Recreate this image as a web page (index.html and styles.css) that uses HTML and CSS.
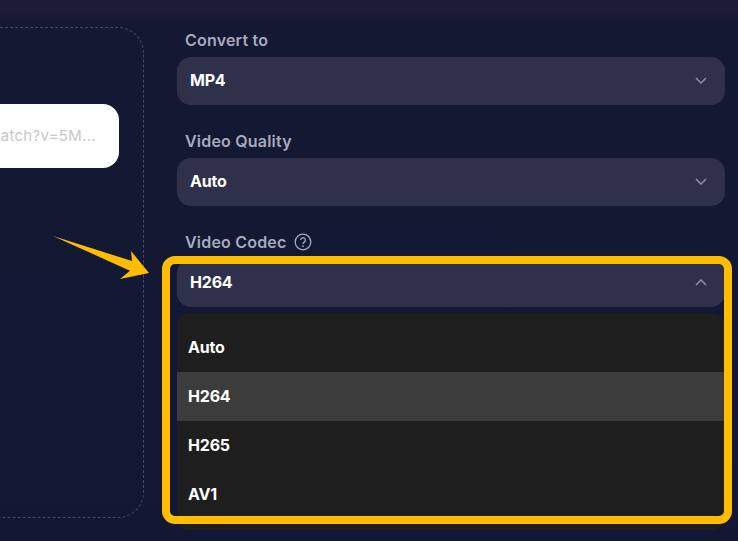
FILE: index.html
```html
<!DOCTYPE html>
<html>
<head>
    <meta charset="UTF-8">
    <title>Video Converter</title>
    <link rel="stylesheet" href="styles.css">
</head>
<body>
    <div class="page">
        <div class="drop-card">
            <div class="url-input">
                <span>https://www.youtube.com/watch?v=5M...</span>
            </div>
        </div>

        <div class="options">
            <div class="field">
                <div class="field-label">Convert to</div>
                <div class="select">
                    <span>MP4</span>
                    <svg class="chevron" viewBox="0 0 12 7"><path d="M1 1l5 5 5-5"/></svg>
                </div>
            </div>
            <div class="field">
                <div class="field-label">Video Quality</div>
                <div class="select">
                    <span>Auto</span>
                    <svg class="chevron" viewBox="0 0 12 7"><path d="M1 1l5 5 5-5"/></svg>
                </div>
            </div>
            <div class="field">
                <div class="field-label">
                    Video Codec
                    <svg class="help-icon" viewBox="0 0 18 18">
                        <circle cx="9" cy="9" r="7.8"/>
                        <path d="M6.7 7.1a2.35 2.35 0 1 1 3.6 2c-.8.5-1.3 1-1.3 1.9"/>
                        <circle class="help-dot" cx="9" cy="13.2" r=".9"/>
                    </svg>
                </div>
                <div class="codec-box">
                    <div class="select">
                        <span>H264</span>
                        <svg class="chevron" viewBox="0 0 12 7"><path d="M1 6l5-5 5 5"/></svg>
                    </div>
                    <div class="dropdown">
                        <div class="dropdown-item">Auto</div>
                        <div class="dropdown-item active">H264</div>
                        <div class="dropdown-item">H265</div>
                        <div class="dropdown-item">AV1</div>
                    </div>
                    <div class="highlight"></div>
                </div>
            </div>
        </div>

        <svg class="arrow" width="100" height="46" viewBox="0 0 100 46">
            <path d="M0 0L79 25L78 15L96 37L67 43L77 34.7Z"/>
        </svg>
    </div>
</body>
</html>
```

FILE: styles.css
```css
* {
    box-sizing: border-box;
}

html, body {
    margin: 0;
    height: 100%;
    overflow: hidden;
}

body {
    background: linear-gradient(#1d1d38 0, #1c1c37 10px, #131833 22px, #121733 100%);
    font-family: Inter, "Noto Sans", sans-serif;
    color: #fff;
}

.page {
    position: relative;
    display: flex;
    align-items: flex-start;
    gap: 33px;
    width: 738px;
    height: 541px;
}

.drop-card {
    flex: none;
    width: 300px;
    height: 491px;
    margin-top: 27px;
    margin-left: -156px;
    padding: 76px 24px 0;
    border: 1px dashed #454962;
    border-radius: 26px;
}

.url-input {
    display: flex;
    justify-content: flex-end;
    align-items: center;
    height: 64px;
    padding: 0 23px 2px 0;
    border-radius: 16px;
    background-color: #fff;
    color: #c8c8c8;
    font-size: 15px;
    letter-spacing: 0.3px;
    white-space: nowrap;
    overflow: hidden;
}

.options {
    flex: none;
    width: 548px;
    padding-top: 28px;
}

.field {
    margin-bottom: 24px;
}

.field-label {
    display: flex;
    align-items: center;
    gap: 7px;
    height: 24px;
    margin: 0 0 5px 8px;
    color: #a7aabd;
    font-size: 16px;
    font-weight: 600;
    letter-spacing: 0.2px;
}

.help-icon {
    width: 18px;
    height: 18px;
    fill: none;
    stroke: #a7aabd;
    stroke-width: 1.3;
}

.help-icon .help-dot {
    fill: #a7aabd;
    stroke: none;
}

.select {
    display: flex;
    justify-content: space-between;
    align-items: center;
    height: 48px;
    padding: 0 18px 2px 13px;
    border-radius: 14px;
    background-color: #2f3049;
    font-size: 16px;
    font-weight: 700;
    letter-spacing: -0.2px;
}

.chevron {
    width: 12px;
    height: 7px;
    fill: none;
    stroke: #9494ad;
    stroke-width: 1.4;
}

.codec-box {
    position: relative;
}

.dropdown {
    margin-top: 6px;
    margin-right: 1px;
    padding: 10px 0 11px;
    border-radius: 12px;
    background-color: #1e1e1e;
}

.dropdown-item {
    display: flex;
    align-items: center;
    height: 49px;
    padding: 0 12px 2px 11px;
    font-size: 16px;
    font-weight: 700;
    letter-spacing: -0.2px;
}

.dropdown-item.active {
    background-color: #3c3c3c;
}

.highlight {
    position: absolute;
    top: -3px;
    left: -15px;
    width: 570px;
    height: 268px;
    border: 8px solid #ffbc00;
    border-radius: 13px;
    pointer-events: none;
}

.arrow {
    position: absolute;
    top: 236px;
    left: 53px;
    fill: #ffbc00;
}
```
